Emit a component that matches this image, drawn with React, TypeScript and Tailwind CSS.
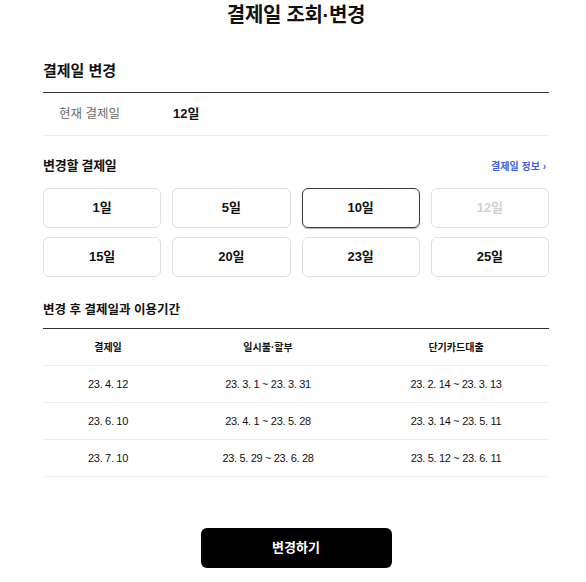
const days = [
  { label: '1일' },
  { label: '5일' },
  { label: '10일', selected: true },
  { label: '12일', disabled: true },
  { label: '15일' },
  { label: '20일' },
  { label: '23일' },
  { label: '25일' },
]

const rows = [
  ['23. 4. 12', '23. 3. 1 ~ 23. 3. 31', '23. 2. 14 ~ 23. 3. 13'],
  ['23. 6. 10', '23. 4. 1 ~ 23. 5. 28', '23. 3. 14 ~ 23. 5. 11'],
  ['23. 7. 10', '23. 5. 29 ~ 23. 6. 28', '23. 5. 12 ~ 23. 6. 11'],
]

export default function App() {
  return (
    <div className="w-full min-h-[582px] bg-white font-['Liberation_Sans','Noto_Sans_CJK_KR',sans-serif] text-[#111]">
      <div className="pl-[43px] pr-[37px] pb-[14px]">
        <h1 className="h-[30px] text-center text-[20px] font-bold leading-[30px] tracking-[-0.015em]">결제일 조회·변경</h1>

        {/* 현재 결제일 */}
        <div className="mt-[29px] h-[34px] border-b border-[#333]">
          <h2 className="text-[15px] font-bold leading-[24px]">결제일 변경</h2>
        </div>
        <div className="flex h-[43px] items-center border-b border-[#eee] pl-[16px]">
          <span className="w-[114px] text-[12.5px] text-[#6b6b6b]">현재 결제일</span>
          <span className="text-[13px] font-bold">12일</span>
        </div>

        {/* 변경할 결제일 */}
        <div className="mt-[20px] flex h-[20px] items-center justify-between">
          <h3 className="text-[13px] font-bold tracking-[-0.02em]">변경할 결제일</h3>
          <a className="pr-[3px] text-[10px] font-bold text-[#3f5fe6]">결제일 정보 ›</a>
        </div>
        <div className="mt-[12px] grid grid-cols-4 gap-x-[11px] gap-y-[9px]">
          {days.map((d) => (
            <button
              key={d.label}
              disabled={d.disabled}
              className={
                d.selected
                  ? 'h-[40px] rounded-[6px] border border-[#3a3a3a] text-[13px] font-bold text-[#111] shadow-[0_1px_1px_rgba(0,0,0,0.3)]'
                  : d.disabled
                    ? 'h-[40px] rounded-[6px] border border-[#e2e2e2] text-[13px] font-bold text-[#cfcfcf]'
                    : 'h-[40px] rounded-[6px] border border-[#dedede] text-[13px] font-bold text-[#111]'
              }
            >
              {d.label}
            </button>
          ))}
        </div>

        {/* 변경 후 결제일과 이용기간 */}
        <div className="mt-[23px] flex h-[20px] items-center">
          <h3 className="text-[12.5px] font-bold">변경 후 결제일과 이용기간</h3>
        </div>
        <div className="mt-[8px] border-t border-[#333]">
          <div className="grid h-[37px] grid-cols-[130px_190px_1fr] items-center border-b border-[#eee] text-center text-[10px] font-bold">
            <span>결제일</span>
            <span>일시불·할부</span>
            <span>단기카드대출</span>
          </div>
          {rows.map((r) => (
            <div
              key={r[0]}
              className="grid h-[37px] grid-cols-[130px_190px_1fr] items-center border-b border-[#eee] text-center text-[11px] tracking-[-0.03em] text-[#111]"
            >
              <span>{r[0]}</span>
              <span>{r[1]}</span>
              <span>{r[2]}</span>
            </div>
          ))}
        </div>

        <button className="mx-auto mt-[51px] block h-[40px] w-[191px] rounded-[6px] bg-black text-[13px] font-bold text-white">
          변경하기
        </button>
      </div>
    </div>
  )
}
